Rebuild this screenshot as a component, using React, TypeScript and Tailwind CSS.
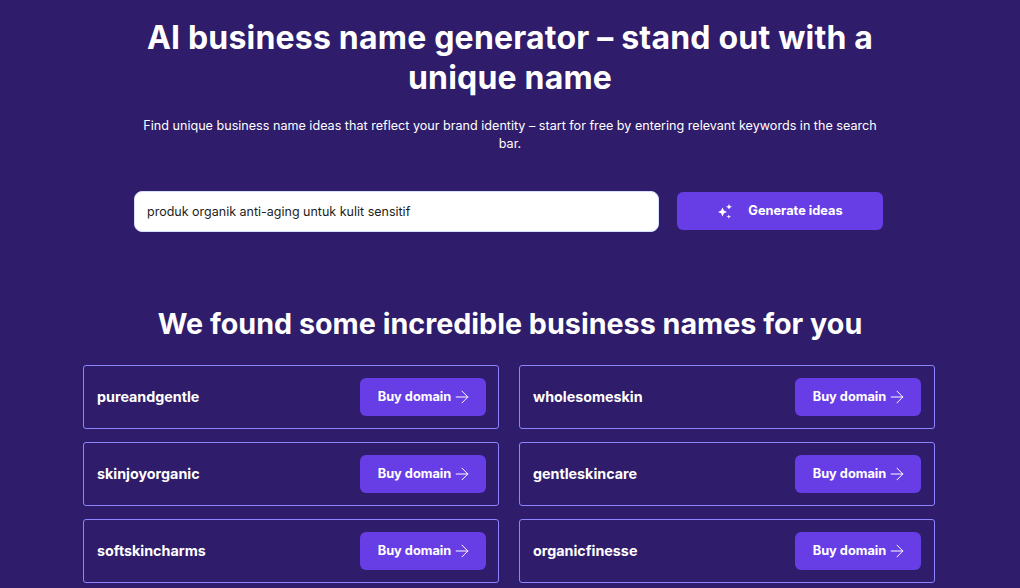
import { ArrowRight } from 'lucide-react'

const names = [
  'pureandgentle',
  'wholesomeskin',
  'skinjoyorganic',
  'gentleskincare',
  'softskincharms',
  'organicfinesse',
]

function Sparkle() {
  return (
    <svg width="16" height="17" viewBox="0 0 16 16" fill="white" className="shrink-0">
      <path d="M5.5 4 6.9 7 10 8.4 6.9 9.8 5.5 13 4.1 9.8 1 8.4 4.1 7Z" />
      <path d="M12 0.5 12.9 2.4 15 3.3 12.9 4.2 12 6.1 11.1 4.2 9 3.3 11.1 2.4Z" />
      <path d="M11.8 11 12.4 12.5 14 13.1 12.4 13.7 11.8 15.2 11.2 13.7 9.6 13.1 11.2 12.5Z" />
    </svg>
  )
}

export default function App() {
  return (
    <div className="h-[588px] overflow-hidden bg-[#2f1c6a] text-white font-['Inter',sans-serif]">
      <div className="mx-auto flex w-[760px] flex-col items-center pt-[18px] text-center">
        <h1 className="text-[32px] leading-[40px] font-bold tracking-[0.2px]">
          AI business name generator – stand out with a unique name
        </h1>
        <p className="mt-[19px] w-[744px] text-[12.6px] leading-[18px]">
          Find unique business name ideas that reflect your brand identity – start for free by entering relevant keywords in the search bar.
        </p>
      </div>

      <div className="mt-[38px] flex items-start pl-[134px]">
        <input
          readOnly
          value="produk organik anti-aging untuk kulit sensitif"
          className="h-[41px] w-[525px] rounded-lg border border-[#d5dfff] bg-white px-3 text-[12.5px] text-[#1d1e20] outline-none"
        />
        <button className="mt-px ml-[18px] flex h-[38px] w-[206px] items-center justify-center gap-[15px] rounded-md bg-[#673de6] text-[12.8px] font-bold">
          <Sparkle />
          Generate ideas
        </button>
      </div>

      <h2 className="mt-[74px] text-center text-[28.7px] leading-[36px] font-bold">
        We found some incredible business names for you
      </h2>

      <div className="mt-[23px] ml-[83px] grid w-[852px] grid-cols-2 gap-x-5 gap-y-[13px]">
        {names.map((name) => (
          <div
            key={name}
            className="flex h-[64px] items-center justify-between rounded-[3px] border border-[#8c85ff] pr-3 pl-[13px] even:pr-[13px]"
          >
            <span className="text-[14.3px] font-bold">{name}</span>
            <button className="flex h-[38px] w-[126px] items-center justify-center gap-px rounded-md bg-[#673de6] pl-1 text-[12.8px] font-bold">
              Buy domain
              <ArrowRight size={20} strokeWidth={1.2} />
            </button>
          </div>
        ))}
      </div>
    </div>
  )
}
